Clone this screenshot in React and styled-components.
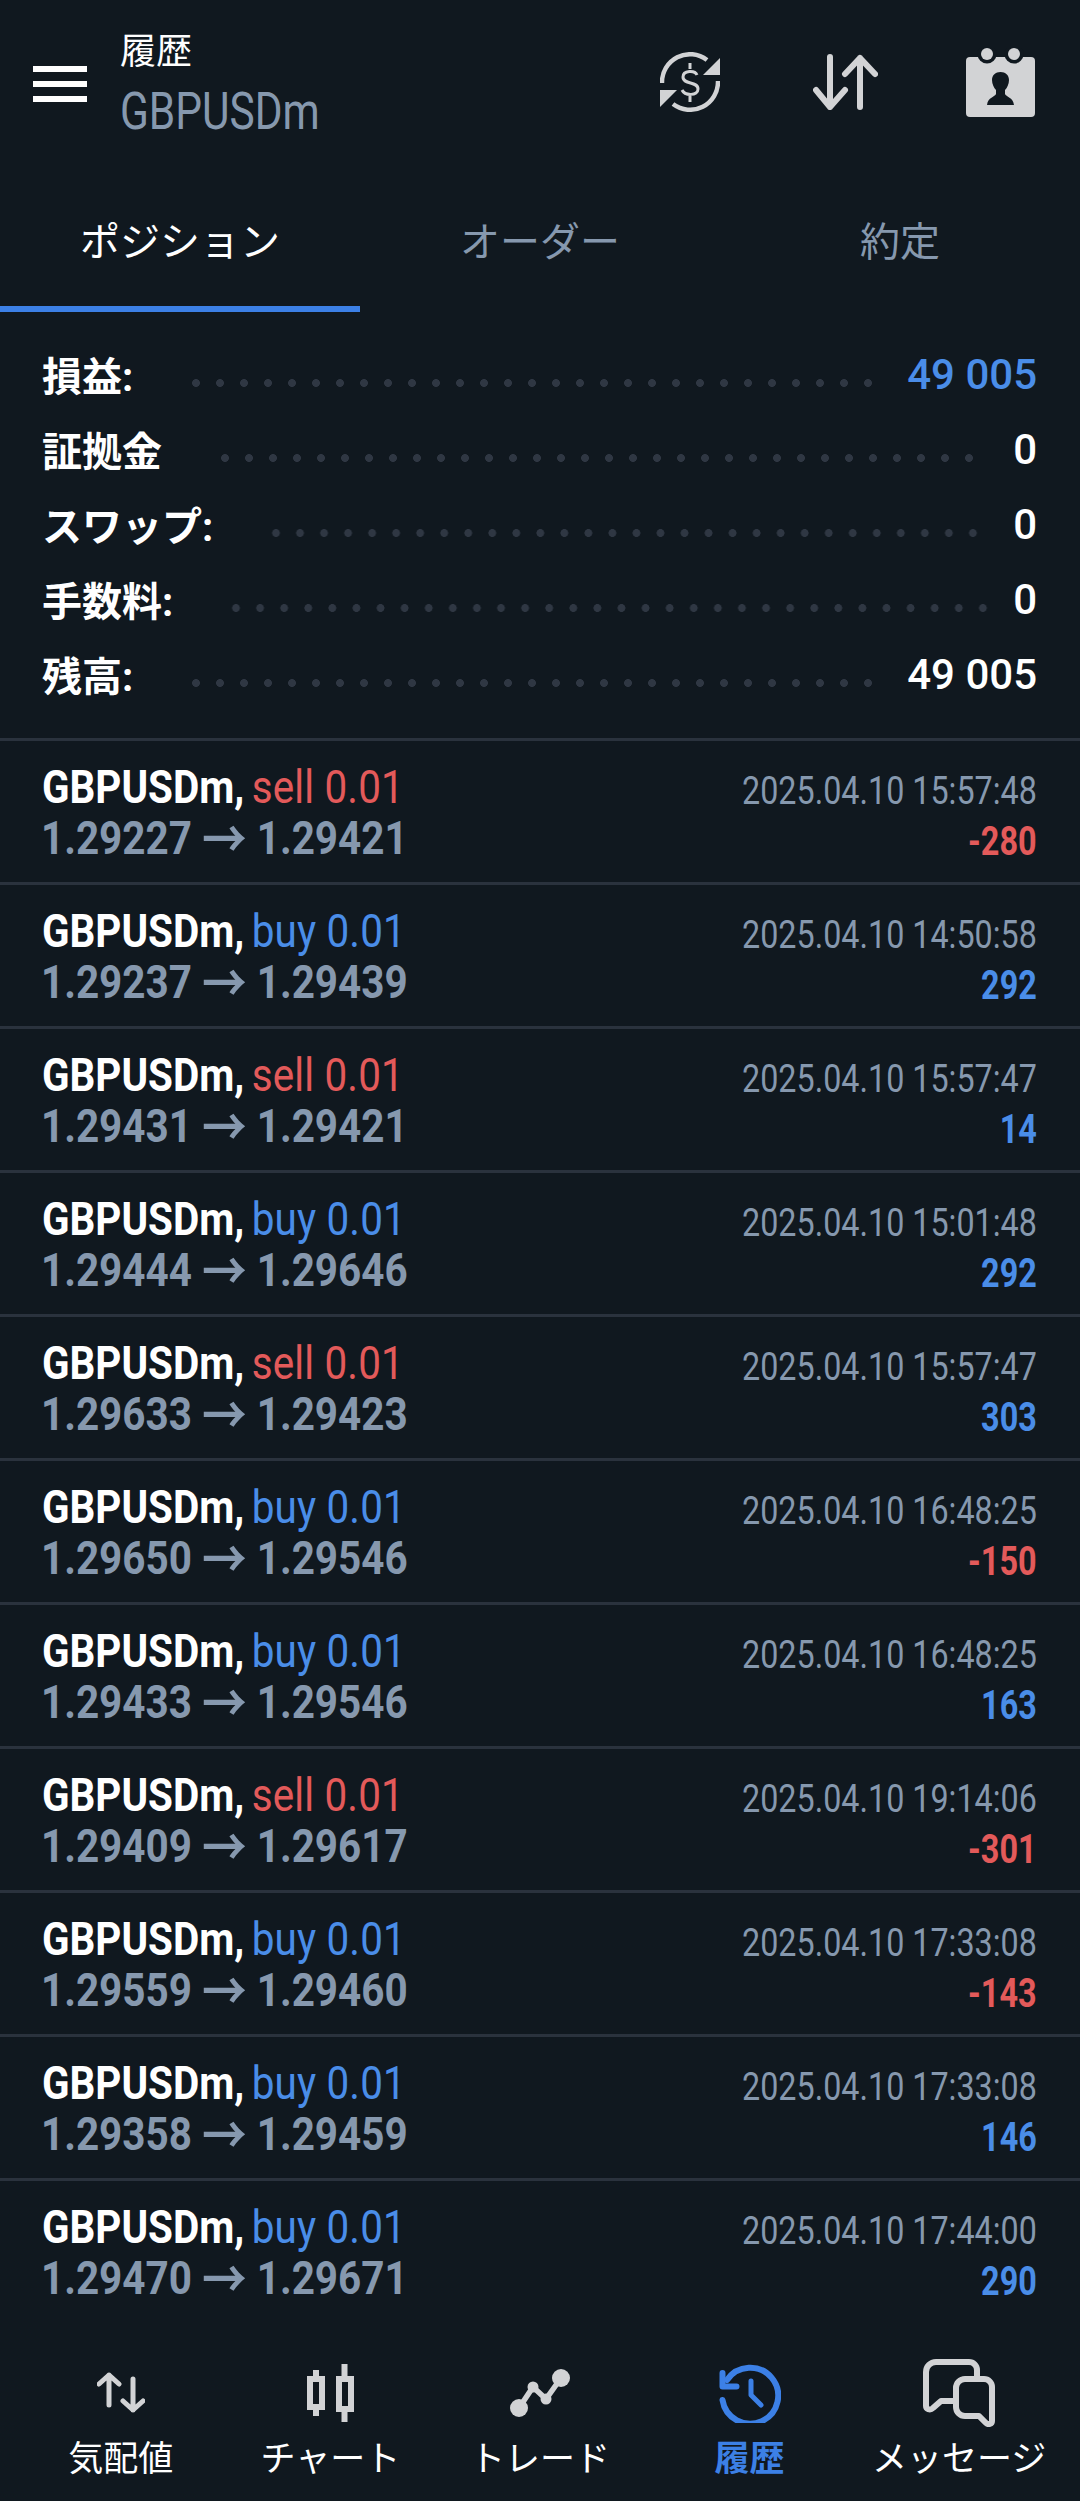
import React from "react";
import styled, { createGlobalStyle } from "styled-components";

const Global = createGlobalStyle`
  html, body { margin: 0; padding: 0; background: #10181f; }
  #root { height: 2501px; }
`;

const JP = `Roboto, "Noto Sans CJK JP", sans-serif`;

const Page = styled.div`
  width: 1080px;
  height: 2501px;
  background: #10181f;
  color: #fff;
  font-family: ${JP};
  display: flex;
  flex-direction: column;
  overflow: hidden;
`;

const Header = styled.header`
  height: 168px;
  flex: none;
  display: flex;
  align-items: center;
  padding: 0 45px 0 33px;
`;

const Burger = styled.div`
  width: 54px;
  height: 36px;
  display: flex;
  flex-direction: column;
  justify-content: space-between;
  margin-right: 34px;
  i { display: block; height: 6px; background: #fff; }
`;

const Titles = styled.div`
  flex: 1;
  display: flex;
  flex-direction: column;
  margin-top: 12px;
`;

const Title = styled.div`
  font-size: 36px;
  line-height: 46px;
  margin-top: -8px;
  margin-left: -1px;
`;

const Symbol = styled.div`
  font-size: 52px;
  line-height: 62px;
  margin-top: 6px;
  margin-left: -1px;
  color: #8698ae;
  transform: scaleX(0.815);
  transform-origin: left;
`;

const Actions = styled.div`
  display: flex;
  align-items: center;
  margin-top: -4px;
`;

const Action = styled.div`
  margin-left: ${(p) => p.$gap || 0}px;
  svg { display: block; }
`;

const Tabs = styled.nav`
  display: flex;
  flex: none;
  height: 144px;
`;

const Tab = styled.div`
  width: 360px;
  display: flex;
  align-items: center;
  justify-content: center;
  font-size: 40px;
  padding-top: 4px;
  box-sizing: border-box;
  color: ${(p) => (p.$active ? "#fff" : "#8698ae")};
  border-bottom: 6px solid ${(p) => (p.$active ? "#3c80e6" : "transparent")};
`;

const Summary = styled.section`
  flex: none;
  padding: 25px 43px 0 42px;
  height: 426px;
  box-sizing: border-box;
`;

const SumRow = styled.div`
  height: 75px;
  display: flex;
  align-items: center;
`;

const SumLabel = styled.span`
  font-size: 40px;
  font-weight: 700;
  margin-top: -2px;
`;

const Leader = styled.span`
  flex: 1;
  height: 8px;
  margin: 16px ${(p) => p.$end}px 0 51px;
  background-image: radial-gradient(circle, #2f3743 3.6px, transparent 4.2px);
  background-size: 24px 8px;
  background-repeat: space no-repeat;
`;

const SumValue = styled.span`
  font-size: 42px;
  font-weight: 500;
  color: ${(p) => (p.$blue ? "#4a8de8" : "#fff")};
`;

const List = styled.div`
  flex: 1;
  min-height: 0;
`;

const Row = styled.article`
  height: 144px;
  box-sizing: border-box;
  border-top: 3px solid #2a323d;
  padding: 0 43px 0 42px;
  display: flex;
  justify-content: space-between;
`;

const Left = styled.div`
  display: flex;
  flex-direction: column;
  padding-top: 20px;
`;

const Right = styled.div`
  display: flex;
  flex-direction: column;
  align-items: flex-end;
  padding-top: 25px;
`;

const Line1 = styled.div`
  font-size: 47px;
  line-height: 52px;
  white-space: nowrap;
  font-weight: 700;
  word-spacing: -3px;
  transform: scaleX(0.86);
  transform-origin: left;
`;

const Side = styled.span`
  font-weight: 400;
  word-spacing: 0;
  letter-spacing: 0.2px;
  color: ${(p) => (p.$side === "sell" ? "#e35a5a" : "#4a8de8")};
`;

const Line2 = styled.div`
  font-size: 47px;
  line-height: 50px;
  white-space: nowrap;
  font-weight: 700;
  margin-left: -1px;
  color: #8698ae;
  transform: scaleX(0.86);
  transform-origin: left;
`;

const Arrow = styled.span`
  font-size: 52px;
  line-height: 0;
  vertical-align: -4px;
`;

const DateText = styled.div`
  font-size: 38px;
  line-height: 50px;
  white-space: nowrap;
  color: #8698ae;
  transform: scaleX(0.85);
  transform-origin: right;
`;

const Amount = styled.div`
  font-size: 40px;
  line-height: 52px;
  font-weight: 700;
  white-space: nowrap;
  color: ${(p) => (p.$neg ? "#e35a5a" : "#4a8de8")};
  transform: scaleX(0.81);
  transform-origin: right;
`;

const BottomNav = styled.nav`
  flex: none;
  height: 177px;
  display: grid;
  grid-template-columns: repeat(5, 1fr);
  padding: 0 16px;
`;

const NavItem = styled.div`
  display: flex;
  flex-direction: column;
  align-items: center;
  color: ${(p) => (p.$active ? "#3c80e6" : "#fff")};
  font-size: 35px;
  font-weight: ${(p) => (p.$active ? 700 : 400)};
  white-space: nowrap;
`;

const NavIcon = styled.div`
  height: 78px;
  margin-top: 30px;
  margin-bottom: 6px;
  display: flex;
  align-items: center;
  justify-content: center;
  svg { display: block; }
`;

const NavLabel = styled.div`
  line-height: 44px;
`;

const G = "#d2d3d5";
const BLUE = "#3c80e6";

const SyncDollar = () => (
  <svg width="60" height="60" viewBox="0 0 60 60" fill="none" stroke={G} strokeWidth="4.500">
    <path d="M2 31A28 28 0 0 1 47 8" />
    <path d="M58 29A28 28 0 0 1 13 52" />
    <path d="M60 6v17H43z" fill={G} stroke="none" />
    <path d="M0 55V38h17z" fill={G} stroke="none" />
    <path d="M37 23c-2-5-14-5-14 2 0 8 15 4 15 12 0 7-13 7-16 1M30 11v6M30 44v6" strokeWidth="3" />
  </svg>
);

const UpDown = () => (
  <svg width="65" height="56" viewBox="0 0 65 56" fill="none" stroke={G} strokeWidth="6" strokeLinecap="round" strokeLinejoin="round">
    <path d="M17 3v50M3 36l14 17 15-17" />
    <path d="M47 53V4M32 20L47 4l15 16" />
  </svg>
);

const Book = () => (
  <svg width="69" height="69" viewBox="0 0 69 69">
    <rect x="0" y="9" width="69" height="60" rx="4" fill={G} />
    <circle cx="21" cy="6" r="9.500" fill="#10181f" />
    <circle cx="48" cy="6" r="9.500" fill="#10181f" />
    <circle cx="21" cy="6" r="6" fill={G} />
    <circle cx="48" cy="6" r="6" fill={G} />
    <path d="M34.500 24c-5 0-8.500 3-8.500 8 0 4 2 8 4 10v4c-1 3-8 3-9 11h27c-1-8-8-8-9-11v-4c2-2 4-6 4-10 0-5-3.500-8-8.500-8z" fill="#10181f" />
  </svg>
);

const QuoteIcon = () => (
  <svg width="48" height="42" viewBox="0 0 48 42" fill="none" stroke={G} strokeWidth="5" strokeLinecap="round" strokeLinejoin="round">
    <path d="M12 33V3M2 12l10-9 10 9" />
    <path d="M36 7v31M26 29l10 9 10-9" />
  </svg>
);

const ChartIcon = () => (
  <svg width="47" height="58" viewBox="0 0 47 58" fill="none" stroke={G} strokeWidth="6">
    <path d="M9 6v9M9 43v9M37.500 0v15M37.500 45v13" />
    <rect x="3" y="15" width="12" height="28" />
    <rect x="32" y="15" width="12" height="30" />
  </svg>
);

const TradeIcon = () => (
  <svg width="60" height="48" viewBox="0 0 60 48" fill={G} stroke="none">
    <path d="M9 39L23 18l13 12L51 9" fill="none" stroke={G} strokeWidth="5.500" />
    <circle cx="9" cy="39" r="9" />
    <circle cx="23" cy="18" r="5.500" />
    <circle cx="36" cy="30" r="5.500" />
    <circle cx="51" cy="9" r="9" />
  </svg>
);

const HistoryIcon = () => (
  <svg width="62" height="60" viewBox="0 0 62 60" fill="none" stroke={BLUE} strokeWidth="6" strokeLinecap="round" strokeLinejoin="round">
    <path d="M3.500 37A28 28 0 1 0 8 17" />
    <path d="M3.500 10v13.500h14" />
    <path d="M32 18v14l10 10" strokeWidth="5" />
  </svg>
);

const MsgIcon = () => (
  <svg width="72" height="68" viewBox="0 0 72 68" fill="none" stroke={G} strokeWidth="6" strokeLinecap="round" strokeLinejoin="round">
    <path d="M54 18v-7a8 8 0 0 0-8-8H13A10 10 0 0 0 3 13v34c0 3 4 5 7 2l8-7h12" />
    <path d="M42 20h19a8 8 0 0 1 8 8v34c0 3-4 4-6 2l-7-7H42a9 9 0 0 1-9-9V29a9 9 0 0 1 9-9z" />
  </svg>
);

const sums = [
  ["損益:", "49 005", true, 27],
  ["証拠金", "0", false, 32],
  ["スワップ:", "0", false, 28],
  ["手数料:", "0", false, 18],
  ["残高:", "49 005", false, 27],
];

const rows = [
  ["sell", "1.29227", "1.29421", "2025.04.10 15:57:48", "-280"],
  ["buy", "1.29237", "1.29439", "2025.04.10 14:50:58", "292"],
  ["sell", "1.29431", "1.29421", "2025.04.10 15:57:47", "14"],
  ["buy", "1.29444", "1.29646", "2025.04.10 15:01:48", "292"],
  ["sell", "1.29633", "1.29423", "2025.04.10 15:57:47", "303"],
  ["buy", "1.29650", "1.29546", "2025.04.10 16:48:25", "-150"],
  ["buy", "1.29433", "1.29546", "2025.04.10 16:48:25", "163"],
  ["sell", "1.29409", "1.29617", "2025.04.10 19:14:06", "-301"],
  ["buy", "1.29559", "1.29460", "2025.04.10 17:33:08", "-143"],
  ["buy", "1.29358", "1.29459", "2025.04.10 17:33:08", "146"],
  ["buy", "1.29470", "1.29671", "2025.04.10 17:44:00", "290"],
];

const nav = [
  ["気配値", <QuoteIcon />],
  ["チャート", <ChartIcon />],
  ["トレード", <TradeIcon />],
  ["履歴", <HistoryIcon />, true],
  ["メッセージ", <MsgIcon />],
];

export default function App() {
  return (
    <Page>
      <Global />
      <Header>
        <Burger><i /><i /><i /></Burger>
        <Titles>
          <Title>履歴</Title>
          <Symbol>GBPUSDm</Symbol>
        </Titles>
        <Actions>
          <Action><SyncDollar /></Action>
          <Action $gap={93}><UpDown /></Action>
          <Action $gap={88}><Book /></Action>
        </Actions>
      </Header>
      <Tabs>
        <Tab $active>ポジション</Tab>
        <Tab>オーダー</Tab>
        <Tab>約定</Tab>
      </Tabs>
      <Summary>
        {sums.map(([l, v, b, e]) => (
          <SumRow key={l}>
            <SumLabel>{l}</SumLabel>
            <Leader $end={e} />
            <SumValue $blue={b}>{v}</SumValue>
          </SumRow>
        ))}
      </Summary>
      <List>
        {rows.map(([side, a, b, d, amt], i) => (
          <Row key={i}>
            <Left>
              <Line1>GBPUSDm, <Side $side={side}>{side} 0.01</Side></Line1>
              <Line2>{a} <Arrow>→</Arrow> {b}</Line2>
            </Left>
            <Right>
              <DateText>{d}</DateText>
              <Amount $neg={amt.startsWith("-")}>{amt}</Amount>
            </Right>
          </Row>
        ))}
      </List>
      <BottomNav>
        {nav.map(([l, ic, act]) => (
          <NavItem key={l} $active={act}>
            <NavIcon>{ic}</NavIcon>
            <NavLabel>{l}</NavLabel>
          </NavItem>
        ))}
      </BottomNav>
    </Page>
  );
}
